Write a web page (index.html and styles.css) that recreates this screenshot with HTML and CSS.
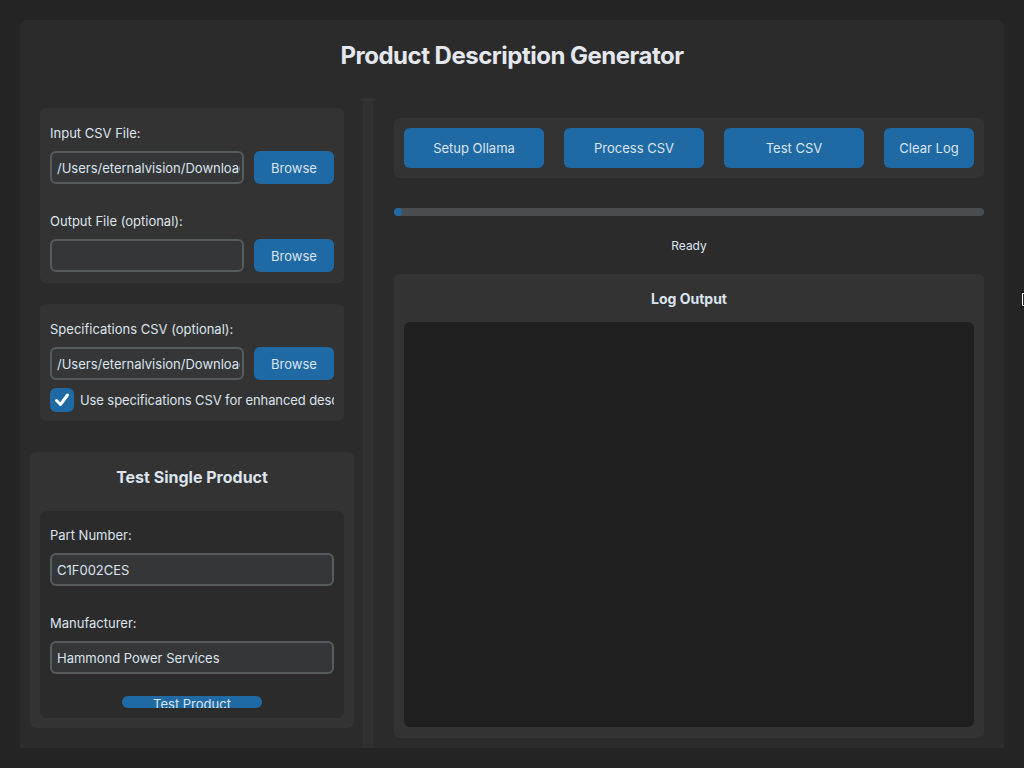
FILE: index.html
```html
<!DOCTYPE html>
<html lang="en">
<head>
<meta charset="utf-8">
<title>Product Description Generator</title>
<link rel="stylesheet" href="styles.css">
</head>
<body>
<div class="app">
  <div class="frame">
    <header class="header">
      <h1 class="title">Product Description Generator</h1>
    </header>
    <div class="body">
      <div class="left">
        <section class="card files">
          <div class="lbl">Input CSV File:</div>
          <div class="row">
            <input class="entry" type="text" value="/Users/eternalvision/Downloads/products.csv" readonly>
            <button class="btn browse">Browse</button>
          </div>
          <div class="lbl lbl-gap">Output File (optional):</div>
          <div class="row">
            <input class="entry" type="text" value="" readonly>
            <button class="btn browse">Browse</button>
          </div>
        </section>
        <section class="card specs">
          <div class="lbl">Specifications CSV (optional):</div>
          <div class="row">
            <input class="entry" type="text" value="/Users/eternalvision/Downloads/specifications.csv" readonly>
            <button class="btn browse">Browse</button>
          </div>
          <div class="check-row">
            <span class="checkbox">
              <svg width="24" height="24" viewBox="0 0 24 24"><path d="M6.5 12.5 L10.5 16.5 L17.5 7" fill="none" stroke="#ffffff" stroke-width="3" stroke-linecap="round" stroke-linejoin="round"/></svg>
            </span>
            <span class="check-text">Use specifications CSV for enhanced descriptions</span>
          </div>
        </section>
        <section class="card test">
          <h2 class="test-title">Test Single Product</h2>
          <div class="inner">
            <div class="lbl">Part Number:</div>
            <input class="entry wide" type="text" value="C1F002CES" readonly>
            <div class="lbl lbl-gap">Manufacturer:</div>
            <input class="entry wide" type="text" value="Hammond Power Services" readonly>
            <div class="clip-wrap"><button class="btn clipped">Test Product</button></div>
          </div>
        </section>
      </div>
      <div class="scrollbar"><div class="scroll-cap"></div></div>
      <div class="right">
        <div class="toolbar">
          <button class="btn action">Setup Ollama</button>
          <button class="btn action">Process CSV</button>
          <button class="btn action">Test CSV</button>
          <button class="btn action small">Clear Log</button>
        </div>
        <div class="progress"><div class="progress-fill" style="width:8px"></div></div>
        <div class="status">Ready</div>
        <section class="log-card">
          <h2 class="log-title">Log Output</h2>
          <div class="log-box"></div>
        </section>
      </div>
    </div>
  </div>
</div>
<div class="cursor">
  <svg width="4" height="15" viewBox="0 0 4 15"><path d="M0.5 0.5 H3.5 V14.5 H0.5" fill="none" stroke="#000" stroke-width="1"/><path d="M1.5 1.5 H4 M1.5 1.5 V13.5 H4" fill="none" stroke="#fff" stroke-width="1"/></svg>
</div>
</body>
</html>
```

FILE: styles.css
```css
* { box-sizing: border-box; }
html, body { margin: 0; padding: 0; }
body {
  width: 1024px;
  height: 768px;
  overflow: hidden;
  background: #242424;
  font-family: Inter, "Noto Sans", sans-serif;
  color: #dce4ee;
  position: relative;
}
.app { padding: 20px; }
.frame {
  width: 984px;
  height: 728px;
  background: #2b2b2b;
  border-radius: 6px 6px 0 0;
  display: flex;
  flex-direction: column;
}
.header {
  height: 78px;
  display: flex;
  justify-content: center;
  padding-top: 22px;
}
.title {
  margin: 0;
  font-size: 24px;
  line-height: 28px;
  font-weight: 700;
  color: #e4e8ee;
  letter-spacing: -0.5px;
}
.body {
  flex: 1;
  min-height: 0;
  display: grid;
  grid-template-columns: 342px 12px 630px;
}
.left {
  padding: 10px 8px 20px 10px;
  display: flex;
  flex-direction: column;
  overflow: hidden;
}
.card {
  background: #333333;
  border-radius: 6px;
}
.files, .specs {
  margin: 0 10px;
  padding: 10px 10px 11px;
}
.specs { margin-top: 21px; padding-bottom: 9px; }
.lbl {
  font-size: 13px;
  line-height: 16px;
  height: 16px;
  margin-top: 7px;
  white-space: nowrap;
}
.lbl-gap { margin-top: 29px; }
.row {
  display: flex;
  gap: 10px;
  margin-top: 10px;
  height: 33px;
}
.entry {
  flex: 1;
  min-width: 0;
  height: 33px;
  border: 2px solid #565b5e;
  background: #343638;
  border-radius: 6px;
  color: #dce4ee;
  font-family: Inter, "Noto Sans", sans-serif;
  font-size: 13px;
  padding: 0 2px 0 5px;
  outline: none;
}
.entry.wide { display: block; width: 100%; margin-top: 10px; }
.btn {
  border: none;
  background: #1f6aa5;
  color: #dce4ee;
  font-family: Inter, "Noto Sans", sans-serif;
  font-size: 13px;
  border-radius: 6px;
  padding: 0;
  cursor: pointer;
}
.browse { width: 80px; height: 33px; flex: none; padding-top: 1px; }
.check-row {
  margin-top: 8px;
  height: 24px;
  display: flex;
  align-items: center;
  gap: 6px;
  overflow: hidden;
  white-space: nowrap;
}
.checkbox {
  flex: none;
  width: 24px;
  height: 24px;
  border-radius: 6px;
  background: #1f6aa5;
  display: block;
}
.checkbox svg { display: block; }
.check-text { font-size: 13px; letter-spacing: -0.1px; }
.test {
  margin-top: 31px;
  padding: 15px 10px 10px;
}
.test-title {
  margin: 0;
  text-align: center;
  font-size: 16px;
  line-height: 20px;
  font-weight: 700;
  color: #dce4ee;
}
.inner {
  margin-top: 24px;
  background: #2b2b2b;
  border-radius: 6px;
  padding: 16px 10px 10px;
}
.inner .lbl { margin-top: 0; }
.inner .lbl-gap { margin-top: 29px; }
.clip-wrap {
  margin-top: 22px;
  display: flex;
  justify-content: center;
}
.clipped {
  width: 140px;
  height: 12px;
  overflow: hidden;
  line-height: 17px;
  display: block;
  text-align: center;
  padding: 0;
}
.scrollbar {
  margin: 0 1px;
  background: #303030;
  position: relative;
}
.scroll-cap {
  height: 3px;
  margin: 0 -2px;
  background: #323232;
  border-radius: 2px;
}
.right {
  padding: 20px 20px 10px 20px;
  display: flex;
  flex-direction: column;
}
.toolbar {
  background: #333333;
  border-radius: 6px;
  padding: 10px;
  display: flex;
  gap: 20px;
  height: 60px;
}
.action { width: 140px; height: 40px; flex: none; }
.action.small { width: 90px; }
.progress {
  margin-top: 30px;
  height: 8px;
  border-radius: 4px;
  background: #4a4d50;
  overflow: hidden;
}
.progress-fill {
  height: 8px;
  border-radius: 4px;
  background: #1f6aa5;
}
.status {
  margin-top: 22px;
  height: 16px;
  line-height: 16px;
  font-size: 12px;
  text-align: center;
}
.log-card {
  margin-top: 20px;
  flex: 1;
  background: #333333;
  border-radius: 6px;
  padding: 16px 10px 11px;
  display: flex;
  flex-direction: column;
}
.log-title {
  margin: 0;
  font-size: 14px;
  line-height: 17px;
  font-weight: 700;
  text-align: center;
  color: #dce4ee;
}
.log-box {
  margin-top: 15px;
  flex: 1;
  background: #1f1f1f;
  border-radius: 6px;
}
.cursor {
  position: absolute;
  left: 1021px;
  top: 292px;
  width: 3px;
  height: 15px;
  overflow: hidden;
}
.cursor svg { display: block; }
```
